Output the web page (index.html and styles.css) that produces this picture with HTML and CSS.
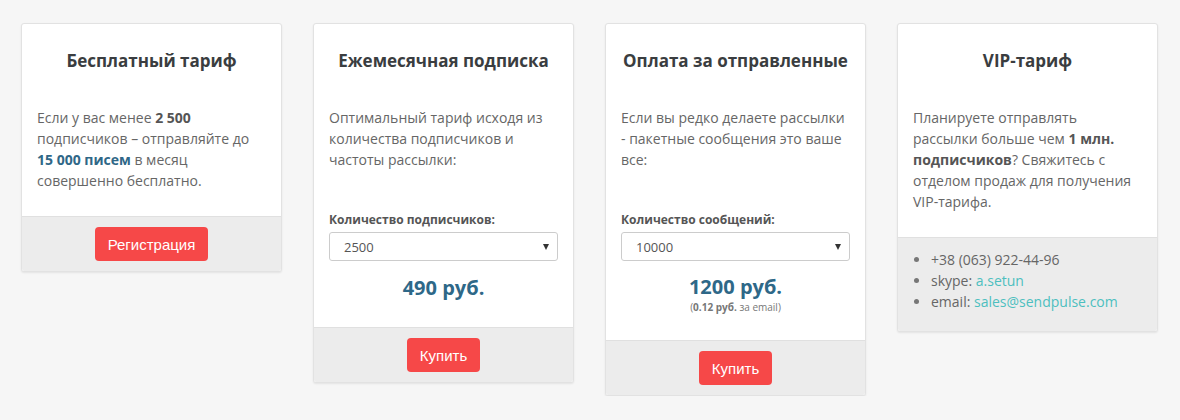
FILE: index.html
```html
<!DOCTYPE html>
<html lang="ru">
<head>
    <meta charset="UTF-8">
    <meta name="viewport" content="width=device-width, initial-scale=1.0">
    <title>Тарифы</title>
    <link rel="stylesheet" href="styles.css">
</head>
<body>
    <div class="plans">

        <!-- Free plan -->
        <div class="plan">
            <div class="plan-body">
                <h3 class="plan-title">Бесплатный тариф</h3>
                <p class="plan-text">Если у вас менее <b>2 500</b> подписчиков – отправляйте до <b class="accent">15 000 писем</b> в месяц совершенно бесплатно.</p>
            </div>
            <div class="plan-footer">
                <button class="btn">Регистрация</button>
            </div>
        </div>

        <!-- Monthly subscription -->
        <div class="plan">
            <div class="plan-body">
                <h3 class="plan-title">Ежемесячная подписка</h3>
                <p class="plan-text">Оптимальный тариф исходя из количества подписчиков и частоты рассылки:</p>
                <div class="form-group">
                    <label class="field-label">Количество подписчиков:</label>
                    <div class="select-wrap">
                        <select class="field-select">
                            <option>2500</option>
                            <option>5000</option>
                            <option>10000</option>
                        </select>
                    </div>
                </div>
                <div class="price">490 руб.</div>
            </div>
            <div class="plan-footer">
                <button class="btn">Купить</button>
            </div>
        </div>

        <!-- Pay per sent -->
        <div class="plan">
            <div class="plan-body">
                <h3 class="plan-title">Оплата за отправленные</h3>
                <p class="plan-text">Если вы редко делаете рассылки - пакетные сообщения это ваше все:</p>
                <div class="form-group">
                    <label class="field-label">Количество сообщений:</label>
                    <div class="select-wrap">
                        <select class="field-select">
                            <option>10000</option>
                            <option>50000</option>
                            <option>100000</option>
                        </select>
                    </div>
                </div>
                <div class="price price-tight">1200 руб.</div>
                <div class="price-note">(<b>0.12 руб.</b> за email)</div>
            </div>
            <div class="plan-footer">
                <button class="btn">Купить</button>
            </div>
        </div>

        <!-- VIP -->
        <div class="plan">
            <div class="plan-body">
                <h3 class="plan-title">VIP-тариф</h3>
                <p class="plan-text">Планируете отправлять рассылки больше чем <b>1 млн. подписчиков</b>? Свяжитесь с отделом продаж для получения VIP-тарифа.</p>
            </div>
            <div class="plan-footer plan-contacts">
                <ul>
                    <li>+38 (063) 922-44-96</li>
                    <li>skype: <a href="#">a.setun</a></li>
                    <li>email: <a href="#">sales@sendpulse.com</a></li>
                </ul>
            </div>
        </div>

    </div>
</body>
</html>
```

FILE: styles.css
```css
body {
    margin: 0;
    font-family: "Open Sans", "Liberation Sans", sans-serif;
    background-color: #f6f6f6;
    color: #666;
}
/* Plans row */
.plans {
    display: flex;
    align-items: flex-start;
    gap: 31px;
    padding: 23px 0 0 21px;
}
.plan {
    width: 261px;
    box-sizing: border-box;
    background: #fff;
    border: 1px solid #e2e2e2;
    border-radius: 3px;
    box-shadow: 0 1px 2px rgba(0, 0, 0, 0.08);
    overflow: hidden;
}
.plan-body {
    padding: 25px 15px 25px;
}
.plan-title {
    margin: 0 0 34px;
    font-size: 17px;
    line-height: 24px;
    font-weight: 700;
    text-align: center;
    color: #3a3d40;
}
.plan-text {
    margin: 0;
    font-size: 14px;
    line-height: 21px;
}
.plan-text b {
    color: #555;
}
.plan-text .accent {
    color: #2f6787;
}
/* Select fields */
.form-group {
    margin-top: 41px;
}
.field-label {
    display: block;
    margin-bottom: 4px;
    font-size: 12px;
    line-height: 17px;
    font-weight: 700;
    color: #555;
}
.select-wrap {
    position: relative;
}
.select-wrap::after {
    content: "";
    position: absolute;
    right: 9px;
    top: 12px;
    border-left: 3.5px solid transparent;
    border-right: 3.5px solid transparent;
    border-top: 6px solid #333;
    pointer-events: none;
}
.field-select {
    display: block;
    width: 100%;
    height: 29px;
    padding: 0 14px;
    font-family: "Open Sans", "Liberation Sans", sans-serif;
    font-size: 13px;
    color: #555;
    background: #fff;
    border: 1px solid #ccc;
    border-radius: 3px;
    appearance: none;
    -webkit-appearance: none;
}
/* Price */
.price {
    margin-top: 13px;
    font-size: 20px;
    line-height: 28px;
    font-weight: 700;
    text-align: center;
    color: #2e6888;
}
.price-tight {
    line-height: 26px;
}
.price-note {
    font-size: 10px;
    line-height: 14px;
    text-align: center;
    color: #777;
    margin-bottom: 1px;
}
/* Footer */
.plan-footer {
    background: #ececec;
    border-top: 1px solid #e0e0e0;
    padding: 10px 15px 10px;
    text-align: center;
}
.btn {
    height: 34px;
    padding: 0 13px;
    font-family: "Liberation Sans", Arial, sans-serif;
    font-size: 15px;
    color: #fff;
    background: #f64848;
    border: none;
    border-radius: 4px;
    cursor: pointer;
}
.plan-contacts {
    text-align: left;
    padding: 11px 15px 19px;
}
.plan-contacts ul {
    margin: 0;
    padding-left: 18px;
    font-size: 14px;
    line-height: 21px;
    color: #666;
}
.plan-contacts li::marker {
    color: #777;
}
.plan-contacts a {
    color: #4dbfbf;
    text-decoration: none;
}
```
